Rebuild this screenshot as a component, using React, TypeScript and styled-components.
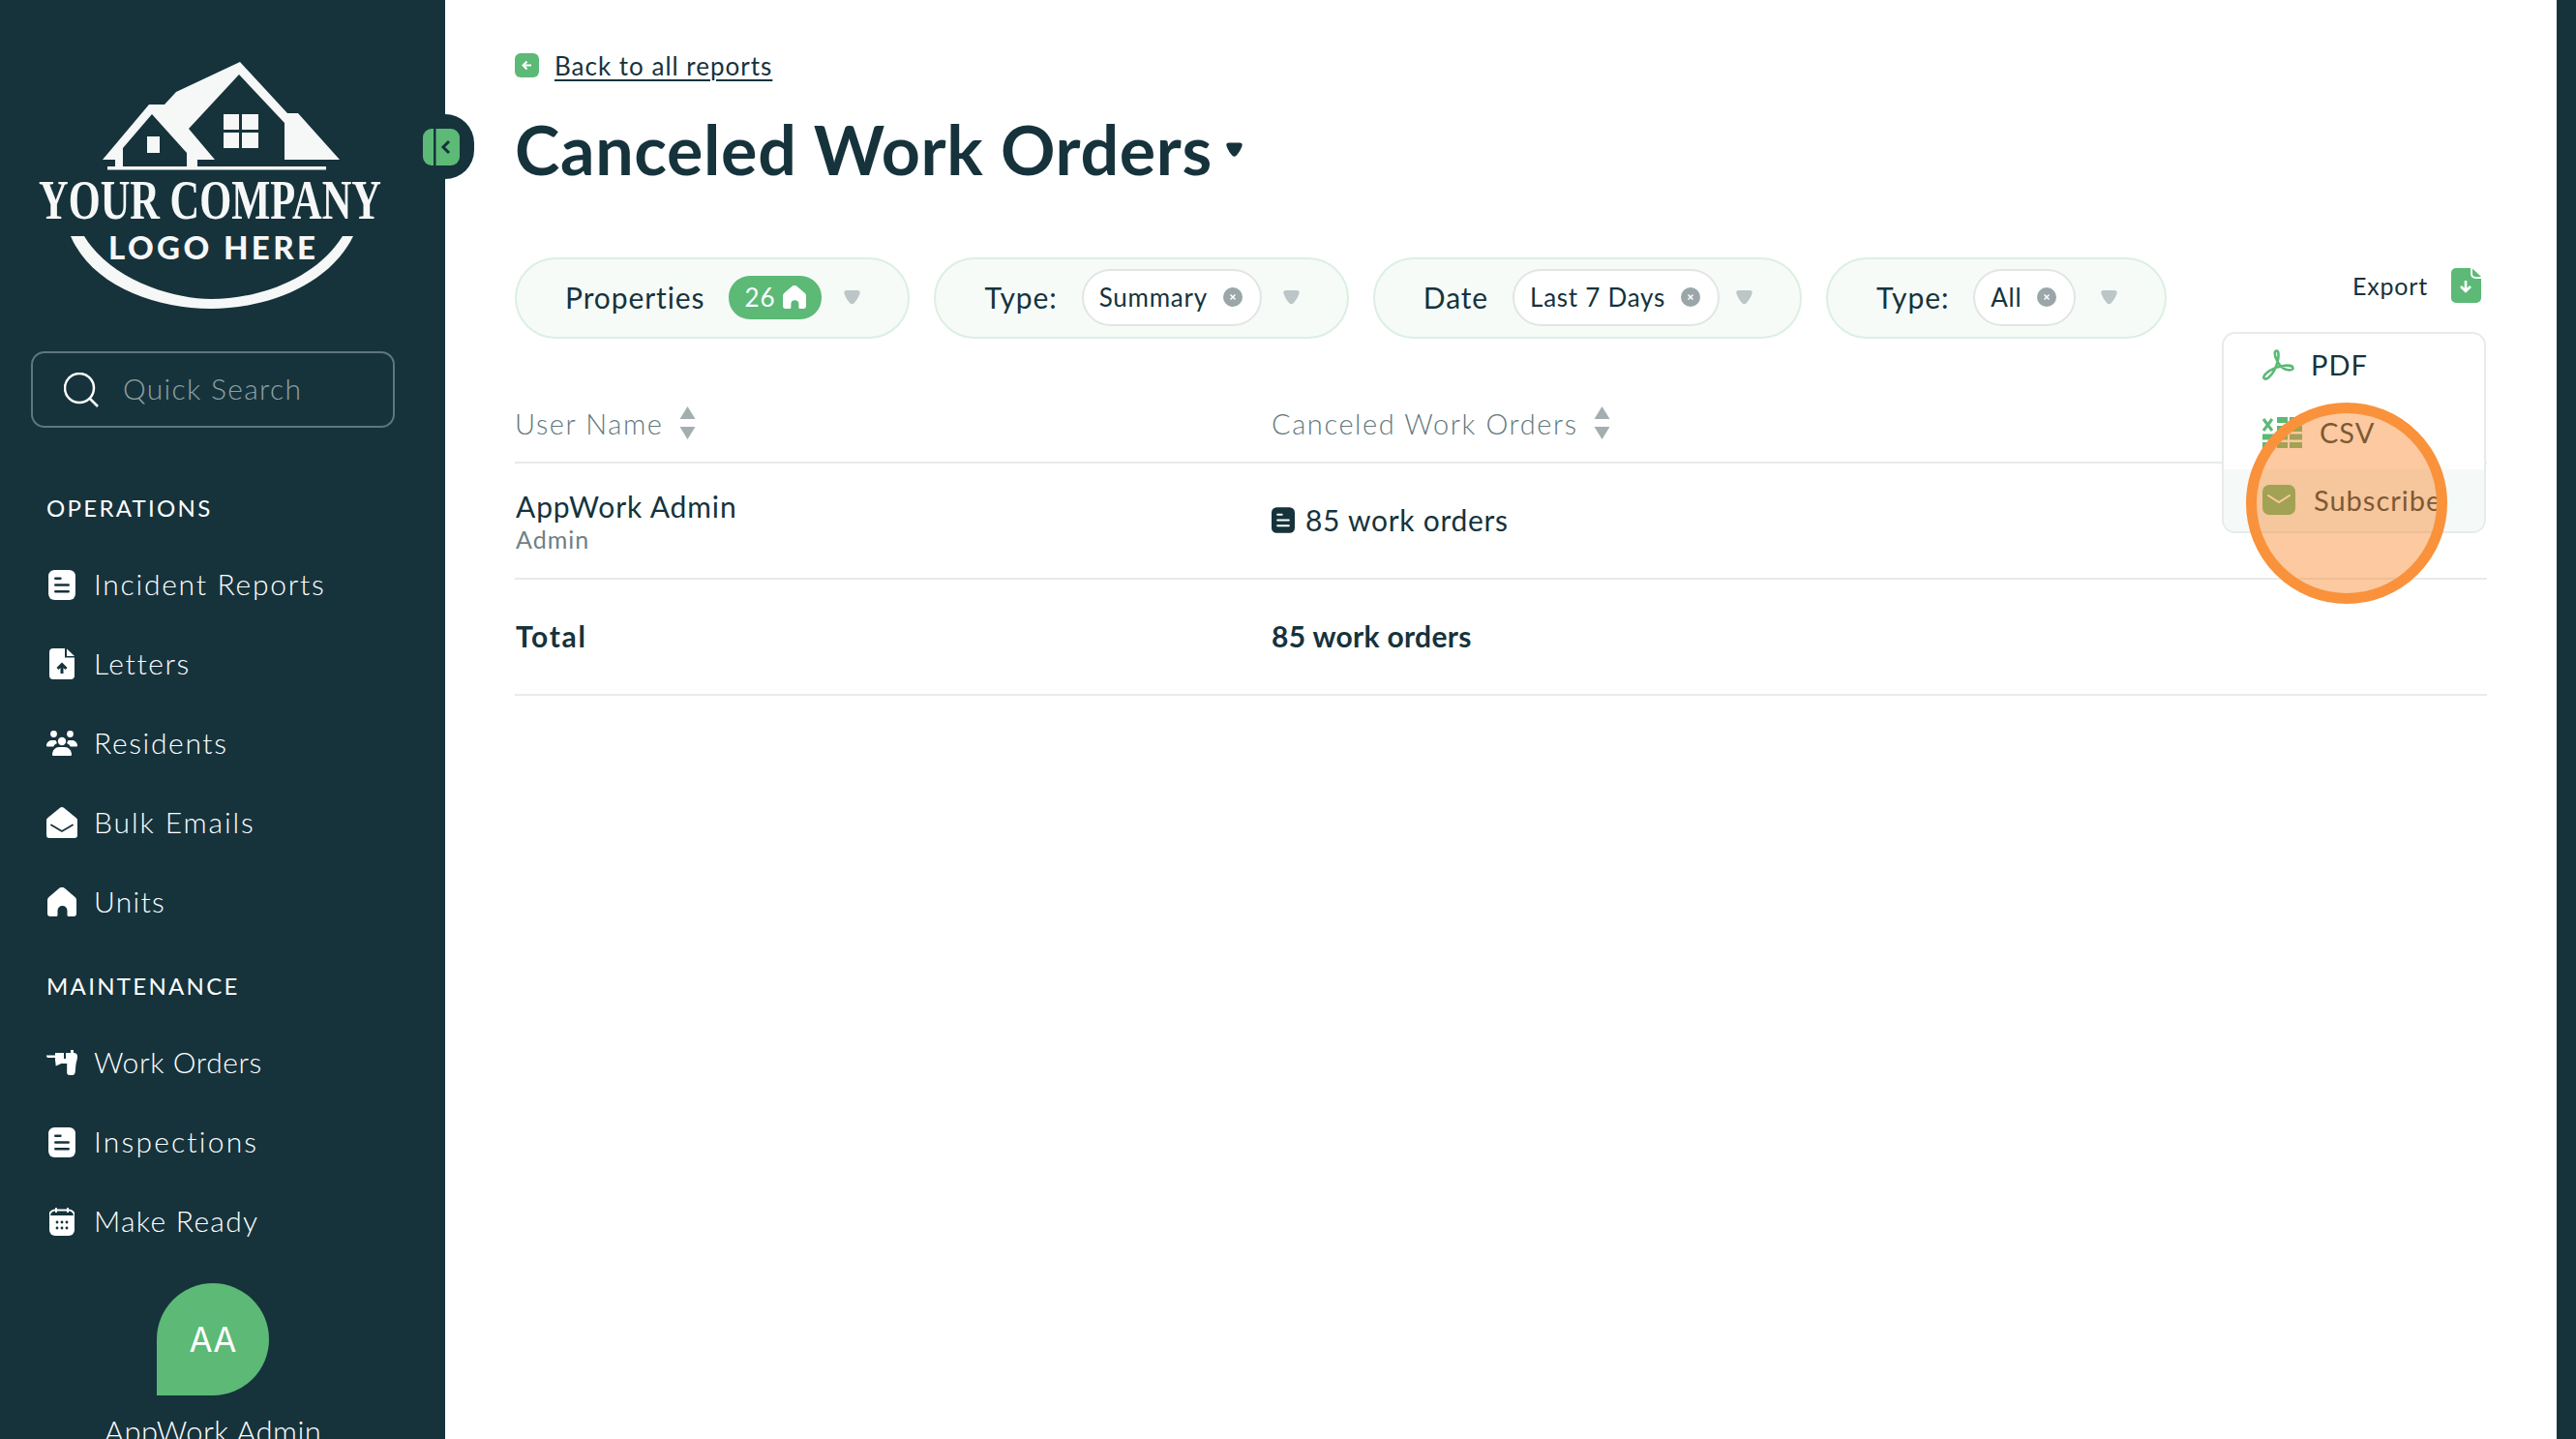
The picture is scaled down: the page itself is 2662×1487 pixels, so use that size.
import styled, { createGlobalStyle } from "styled-components";

const DARK = "#16333c";
const GREEN = "#5cb976";
const LINE = "#e8ebeb";

const GlobalStyle = createGlobalStyle`
  html, body {
    margin: 0;
    padding: 0;
    background: #fff;
    font-family: "Lato", "Noto Sans", sans-serif;
    color: ${DARK};
  }
  * { box-sizing: border-box; }
`;

const Shell = styled.div`
  position: relative;
  display: flex;
  width: 2662px;
  height: 1487px;
  overflow: hidden;
`;

const Sidebar = styled.aside`
  position: relative;
  flex: 0 0 460px;
  background: ${DARK};
  color: #fff;
  display: flex;
  flex-direction: column;
`;

const LogoSvg = styled.svg`
  display: block;
  flex: none;
  width: 460px;
  height: 363px;
`;

const SearchBox = styled.div`
  flex: none;
  display: flex;
  align-items: center;
  gap: 25px;
  width: 376px;
  height: 79px;
  margin: 0 0 37px 32px;
  padding-left: 32px;
  border: 2px solid #5e767d;
  border-radius: 14px;
  color: #8ea0a5;
  font-size: 30px;
  font-weight: 300;
  letter-spacing: 1.3px;
  span { margin-bottom: 3px; }
`;

const SectionLabel = styled.div`
  flex: none;
  height: 84px;
  padding: 6px 0 0 48px;
  display: flex;
  align-items: center;
  font-size: 24px;
  letter-spacing: 2.3px;
`;

const NavItem = styled.div`
  flex: none;
  height: 82px;
  display: flex;
  align-items: center;
  padding-left: 48px;
  font-size: 30px;
  font-weight: 300;
`;

const NavIcon = styled.span`
  flex: 0 0 32px;
  margin-right: 17px;
  display: flex;
  align-items: center;
  justify-content: center;
  svg { display: block; }
`;

const NavLabel = styled.span<{ $track: number }>`
  margin-bottom: 3px;
  letter-spacing: ${(p) => p.$track}px;
`;

const UserBlock = styled.div`
  flex: none;
  margin-top: 23px;
  padding-right: 20px;
  display: flex;
  flex-direction: column;
  align-items: center;
`;

const Avatar = styled.div`
  width: 116px;
  height: 116px;
  border-radius: 50% 50% 50% 0;
  background: ${GREEN};
  display: flex;
  align-items: center;
  justify-content: center;
  font-family: "Inter", sans-serif;
  font-size: 35px;
`;

const UserName = styled.div`
  margin-top: 18px;
  font-size: 31px;
  font-weight: 300;
  letter-spacing: 0.4px;
  white-space: nowrap;
`;

const CollapseTab = styled.div`
  position: absolute;
  top: 118px;
  left: 460px;
  width: 30px;
  height: 67px;
  background: ${DARK};
  border-radius: 0 34px 34px 0;
`;

const CollapseButton = styled.svg`
  position: absolute;
  top: 133px;
  left: 437px;
`;

const Main = styled.main`
  position: relative;
  flex: 1;
  min-width: 0;
  padding: 55px 72px 0;
`;

const RightStrip = styled.div`
  flex: 0 0 20px;
  background: ${DARK};
`;

const BackLink = styled.div`
  display: flex;
  align-items: center;
  gap: 16px;
  height: 25px;
  font-size: 26px;
  letter-spacing: 1px;
  span {
    text-decoration: underline;
    text-underline-offset: 4px;
    text-decoration-thickness: 2px;
  }
`;

const TitleRow = styled.div`
  display: flex;
  align-items: center;
  gap: 14px;
  height: 110px;
  margin-top: 19px;
`;

const Title = styled.h1`
  margin: 0;
  font-size: 70px;
  font-weight: 700;
  letter-spacing: 0.65px;
`;

const FilterBar = styled.div`
  position: relative;
  display: flex;
  align-items: center;
  gap: 25px;
  margin-top: 57px;
`;

const Pill = styled.div`
  display: flex;
  align-items: center;
  height: 84px;
  padding: 0 49px 2px 50px;
  background: #f6fbf8;
  border: 2px solid #dcefe3;
  border-radius: 42px;
  font-size: 30px;
  letter-spacing: 0.9px;
`;

const PillLabel = styled.span`
  margin-right: 25px;
`;

const CountBadge = styled.span`
  display: flex;
  align-items: center;
  justify-content: center;
  gap: 8px;
  width: 96px;
  height: 45px;
  margin-right: 23px;
  border-radius: 22px;
  background: ${GREEN};
  color: #fff;
  font-size: 26px;
`;

const Chip = styled.span<{ $after: number }>`
  display: flex;
  align-items: center;
  gap: 16px;
  height: 59px;
  margin-right: ${(p) => p.$after}px;
  padding: 0 18px 0 16px;
  background: #fff;
  border: 2px solid #e2e5e5;
  border-radius: 30px;
  font-size: 26px;
  letter-spacing: 0.75px;
`;

const ExportButton = styled.div`
  position: absolute;
  top: 11px;
  right: 6px;
  display: flex;
  align-items: center;
  gap: 24px;
  height: 36px;
  font-size: 25px;
  letter-spacing: 0.8px;
`;

const ExportMenu = styled.div`
  position: absolute;
  top: 343px;
  left: 2296px;
  width: 273px;
  height: 208px;
  background: #fff;
  border: 2px solid ${LINE};
  border-radius: 14px;
  overflow: hidden;
  z-index: 2;
`;

const MenuItem = styled.div<{ $active?: boolean; $gap: number }>`
  display: flex;
  align-items: center;
  gap: ${(p) => p.$gap}px;
  height: 70px;
  padding: 0 0 7px 40px;
  background: ${(p) => (p.$active ? "#f5f9f7" : "transparent")};
  font-size: 29px;
  letter-spacing: 1px;
`;

const Highlight = styled.div`
  position: absolute;
  top: 416px;
  left: 2321px;
  width: 208px;
  height: 208px;
  border: 11px solid #f9923b;
  border-radius: 50%;
  background: rgba(249, 135, 45, 0.45);
  z-index: 3;
`;

const TableRow = styled.div<{ $height: number }>`
  display: grid;
  grid-template-columns: 782px 1fr;
  align-items: center;
  height: ${(p) => p.$height}px;
  border-bottom: 2px solid ${LINE};
`;

const HeaderRow = styled(TableRow)`
  margin-top: 49px;
  padding-bottom: 2px;
  color: #64787d;
  font-size: 29px;
  font-weight: 300;
  letter-spacing: 1.6px;
`;

const HeaderCell = styled.div`
  display: flex;
  align-items: center;
  gap: 15px;
`;

const NameCell = styled.div`
  padding: 2px 0 0 1px;
  font-size: 30px;
  letter-spacing: 0.9px;
  line-height: 36px;
`;

const RoleText = styled.div`
  color: #6f8085;
  font-size: 25px;
  letter-spacing: 1px;
  line-height: 32px;
`;

const CountCell = styled.div`
  display: flex;
  align-items: center;
  gap: 11px;
  padding-bottom: 2px;
  font-size: 30px;
  letter-spacing: 0.7px;
`;

const TotalCell = styled.div<{ $spacing: number; $indent?: number }>`
  padding: 0 0 2px ${(p) => p.$indent ?? 0}px;
  font-size: 30px;
  font-weight: 700;
  letter-spacing: ${(p) => p.$spacing}px;
`;

type IconProps = { color?: string; cut?: string };

const DocIcon = ({ color = "#fff", cut = DARK, w = 28, h = 31 }: IconProps & { w?: number; h?: number }) => (
  <svg width={w} height={h} viewBox="0 0 27 30">
    <rect width="27" height="30" rx="6" fill={color} />
    <path d="M7 8.500h5M7 15h13M7 21.500h13" stroke={cut} strokeWidth="2.400" strokeLinecap="round" />
  </svg>
);

const UploadFileIcon = () => (
  <svg width="26" height="32" viewBox="0 0 26 32">
    <path d="M4 0h12v9.500h10V28a4 4 0 0 1-4 4H4a4 4 0 0 1-4-4V4a4 4 0 0 1 4-4z" fill="#fff" />
    <path d="M18 0.500L26 8h-8z" fill="#fff" />
    <path d="M13 26v-9M8.500 21l4.500-4.500L17.500 21" fill="none" stroke={DARK} strokeWidth="3" />
  </svg>
);

const PeopleIcon = () => (
  <svg width="32" height="26" viewBox="0 0 32 26" fill="#fff">
    <circle cx="7.500" cy="3.500" r="3.400" />
    <circle cx="24.500" cy="3.500" r="3.400" />
    <circle cx="16" cy="11" r="4.200" />
    <path d="M0 15.500c0-3.500 3-5.500 6-5.500h3.500c.5 1 1 2 1.500 3-2 1-3 1.800-3.800 3.500H1a1 1 0 0 1-1-1z" />
    <path d="M32 15.500c0-3.500-3-5.500-6-5.500h-3.500c-.5 1-1 2-1.500 3 2 1 3 1.800 3.800 3.500H31a1 1 0 0 0 1-1z" />
    <path d="M6 25c0-5 3.500-8 7-8h6c3.500 0 7 3 7 8a1 1 0 0 1-1 1H7a1 1 0 0 1-1-1z" />
  </svg>
);

const MailOpenIcon = () => (
  <svg width="32" height="32" viewBox="0 0 32 32">
    <path d="M0 13.500c0-1 .4-1.700 1.200-2.300L14 .8a3.200 3.200 0 0 1 4 0l12.800 10.400c.8.600 1.200 1.300 1.200 2.300V29a3 3 0 0 1-3 3H3a3 3 0 0 1-3-3z" fill="#fff" />
    <path d="M5 18.500l11 6.500 11-6.500" fill="none" stroke={DARK} strokeWidth="1.800" strokeLinecap="round" />
  </svg>
);

const HomeIcon = ({ size = 30, color = "#fff" }: IconProps & { size?: number }) => (
  <svg width={size} height={size} viewBox="0 0 30 30">
    <path d="M0 13.500c0-1.500.5-2.600 1.500-3.500l10.500-9a4.500 4.500 0 0 1 6 0l10.500 9c1 .9 1.500 2 1.500 3.500V27a3 3 0 0 1-3 3h-5a1.500 1.500 0 0 1-1.500-1.500V24a5 5 0 0 0-10 0v4.500A1.500 1.500 0 0 1 9 30H3a3 3 0 0 1-3-3z" fill={color} />
  </svg>
);

const DrillIcon = () => (
  <svg width="32" height="26" viewBox="0 0 32 26" fill="#fff">
    <path d="M0 5.500h9V3h19.500c2 0 3.500 1.500 3.500 3.500 0 3-1 5.500-1.500 8-.4 3-.5 6-.8 8.500-.2 2-1.500 3-3 3h-3c-1.500 0-2.500-1-2.500-2.500V14h-6l-2 1-3.500 1.500-.5-5H9V8H1.500C.5 8 0 7 0 5.500z" />
    <rect x="18" y="3" width="2" height="6" fill={DARK} />
    <rect x="25" y="0" width="3" height="3" />
  </svg>
);

const CalendarIcon = () => (
  <svg width="26" height="29" viewBox="0 0 26 29">
    <path d="M7 0v5M19 0v5" stroke="#fff" strokeWidth="2" />
    <path d="M6 2.500h14a6 6 0 0 1 6 6V9H0v-.5a6 6 0 0 1 6-6z" fill="none" stroke="#fff" strokeWidth="2" />
    <path d="M0 10h26v13a6 6 0 0 1-6 6H6a6 6 0 0 1-6-6z" fill="#fff" />
    {[8, 13, 18].map((x) =>
      [15, 21].map((y) => <circle key={`${x}-${y}`} cx={x} cy={y} r="1.400" fill={DARK} />)
    )}
  </svg>
);

const SearchIcon = () => (
  <svg width="36" height="36" viewBox="0 0 36 36" fill="none" stroke="#fff">
    <circle cx="16" cy="16" r="15" strokeWidth="2.500" />
    <path d="M27 27l8 8" strokeWidth="2.500" />
  </svg>
);

const Caret = ({ color = "#bcc6c8", w = 17, h = 14 }: IconProps & { w?: number; h?: number }) => (
  <svg width={w} height={h} viewBox="0 0 17 14">
    <path d="M3 0h11c2 0 3 1.200 2.600 3-.5 2.500-3.600 8-6 10.200a3 3 0 0 1-4.200 0C4 11 .9 5.500.4 3 0 1.200 1 0 3 0z" fill={color} />
  </svg>
);

const SortArrows = () => (
  <svg width="19" height="34" viewBox="0 0 19 34" fill="#a3aeb1">
    <path d="M9.500 0l8 13h-16z" />
    <path d="M9.500 34l8-13h-16z" />
  </svg>
);

const ClearIcon = () => (
  <svg width="20" height="20" viewBox="0 0 20 20">
    <circle cx="10" cy="10" r="10" fill="#9aa6a9" />
    <path d="M7.500 7.500l5 5M12.500 7.500l-5 5" stroke="#fff" strokeWidth="1.500" />
  </svg>
);

const BackIcon = () => (
  <svg width="25" height="25" viewBox="0 0 25 25">
    <rect width="25" height="25" rx="6" fill={GREEN} />
    <path d="M17 12.500H9M12.500 8.500l-4 4 4 4" fill="none" stroke="#fff" strokeWidth="2" />
  </svg>
);

const DownloadFileIcon = () => (
  <svg width="31" height="36" viewBox="0 0 31 36">
    <path d="M5 0h15v6a5 5 0 0 0 5 5h6v20a5 5 0 0 1-5 5H5a5 5 0 0 1-5-5V5a5 5 0 0 1 5-5z" fill={GREEN} />
    <path d="M22 0.500L31 9h-6a3 3 0 0 1-3-3z" fill={GREEN} />
    <path d="M15 13v10M10 19l5 5 5-5" fill="none" stroke="#fff" strokeWidth="2.600" />
  </svg>
);

const PdfIcon = () => (
  <svg width="33" height="32" viewBox="0 0 33 32" fill="none" stroke={GREEN} strokeWidth="2.600">
    <path d="M15 1.500c-3 0-3 4 0 10 2 4.500 5.500 8.500 10 9.500 4 1 7 0 6.500-2-.5-2.300-6-2.800-12.500-1.500C11 19 3 24 1.500 28c-1 3 2 3.500 5 1 4-3.500 8-11 9.500-18 1-5 .5-9.500-1-9.500z" />
  </svg>
);

const CsvIcon = () => (
  <svg width="41" height="32" viewBox="0 0 41 32" fill={GREEN}>
    <path d="M1 2l9 12M10 2L1 14" stroke={GREEN} strokeWidth="3" />
    <rect x="15" y="0" width="11" height="6" />
    <rect x="28" y="0" width="13" height="6" />
    <rect x="15" y="9" width="11" height="6" />
    <rect x="28" y="9" width="13" height="6" />
    <rect x="0" y="17.500" width="26" height="6" />
    <rect x="28" y="17.500" width="13" height="6" />
    <rect x="0" y="26" width="13" height="6" />
    <rect x="15" y="26" width="11" height="6" />
    <rect x="28" y="26" width="13" height="6" />
  </svg>
);

const MailIcon = () => (
  <svg width="34" height="31" viewBox="0 0 34 31">
    <rect width="34" height="31" rx="7" fill={GREEN} />
    <path d="M6 11l11 7 11-7" fill="none" stroke="#fff" strokeWidth="2" strokeLinecap="round" />
  </svg>
);

const Logo = () => (
  <LogoSvg viewBox="0 0 460 363" fill="#f6f7f7">
    <path d="M106 165L154 108H170L182 95L248 64L297 117H308L351 165H294V127L247 77L195 133L222 165H204V172H193V158L157 118L127 153V172H119V165Z" />
    <rect x="111" y="172" width="226" height="3.500" />
    <rect x="152" y="141" width="13" height="17" />
    <rect x="231" y="118" width="16" height="16" />
    <rect x="250" y="118" width="17" height="16" />
    <rect x="231" y="137" width="16" height="16" />
    <rect x="250" y="137" width="17" height="16" />
    <text
      x="40"
      y="226"
      textLength="354"
      lengthAdjust="spacingAndGlyphs"
      fontFamily="Liberation Serif, serif"
      fontWeight="700"
      fontSize="57"
    >
      YOUR COMPANY
    </text>
    <text
      x="112"
      y="268"
      textLength="214"
      lengthAdjust="spacing"
      fontFamily="Lato, sans-serif"
      fontWeight="900"
      fontSize="33"
    >
      LOGO HERE
    </text>
    <path d="M73 244H87C115 290 180 309 218 309C265 309 325 290 354 244H365C340 295 275 319 218 319C160 319 95 295 73 244Z" />
  </LogoSvg>
);

const operations = [
  { label: "Incident Reports", track: 1.75, icon: <DocIcon /> },
  { label: "Letters", track: 1.6, icon: <UploadFileIcon /> },
  { label: "Residents", track: 1.65, icon: <PeopleIcon /> },
  { label: "Bulk Emails", track: 1.9, icon: <MailOpenIcon /> },
  { label: "Units", track: 1.3, icon: <HomeIcon /> },
];

const maintenance = [
  { label: "Work Orders", track: 0.6, icon: <DrillIcon /> },
  { label: "Inspections", track: 2.2, icon: <DocIcon /> },
  { label: "Make Ready", track: 1.3, icon: <CalendarIcon /> },
];

const filters = [
  { label: "Type:", value: "Summary", after: 22 },
  { label: "Date", value: "Last 7 Days", after: 17 },
  { label: "Type:", value: "All", after: 26 },
];

export default function App() {
  return (
    <Shell>
      <GlobalStyle />
      <Sidebar>
        <Logo />
        <SearchBox>
          <SearchIcon />
          <span>Quick Search</span>
        </SearchBox>
        <SectionLabel>OPERATIONS</SectionLabel>
        {operations.map((item) => (
          <NavItem key={item.label}>
            <NavIcon>{item.icon}</NavIcon>
            <NavLabel $track={item.track}>{item.label}</NavLabel>
          </NavItem>
        ))}
        <SectionLabel>MAINTENANCE</SectionLabel>
        {maintenance.map((item) => (
          <NavItem key={item.label}>
            <NavIcon>{item.icon}</NavIcon>
            <NavLabel $track={item.track}>{item.label}</NavLabel>
          </NavItem>
        ))}
        <UserBlock>
          <Avatar>AA</Avatar>
          <UserName>AppWork Admin</UserName>
        </UserBlock>
      </Sidebar>
      <CollapseTab />
      <CollapseButton width="38" height="38" viewBox="0 0 38 38">
        <rect width="38" height="38" rx="9" fill={GREEN} />
        <rect x="11" width="2.500" height="38" fill={DARK} />
        <path d="M27 13l-6 6 6 6" fill="none" stroke={DARK} strokeWidth="3" />
      </CollapseButton>
      <Main>
        <BackLink>
          <BackIcon />
          <span>Back to all reports</span>
        </BackLink>
        <TitleRow>
          <Title>Canceled Work Orders</Title>
          <Caret color={DARK} w={17} h={15} />
        </TitleRow>
        <FilterBar>
          <Pill>
            <PillLabel>Properties</PillLabel>
            <CountBadge>
              26
              <HomeIcon size={24} />
            </CountBadge>
            <Caret />
          </Pill>
          {filters.map((f) => (
            <Pill key={f.label + f.value}>
              <PillLabel>{f.label}</PillLabel>
              <Chip $after={f.after}>
                {f.value}
                <ClearIcon />
              </Chip>
              <Caret />
            </Pill>
          ))}
          <ExportButton>
            Export
            <DownloadFileIcon />
          </ExportButton>
        </FilterBar>
        <HeaderRow $height={80}>
          <HeaderCell>
            User Name
            <SortArrows />
          </HeaderCell>
          <HeaderCell>
            Canceled Work Orders
            <SortArrows />
          </HeaderCell>
        </HeaderRow>
        <TableRow $height={120}>
          <NameCell>
            AppWork Admin
            <RoleText>Admin</RoleText>
          </NameCell>
          <CountCell>
            <DocIcon color={DARK} cut="#fff" w={24} h={27} />
            85 work orders
          </CountCell>
        </TableRow>
        <TableRow $height={120}>
          <TotalCell $spacing={1.7} $indent={1}>Total</TotalCell>
          <TotalCell $spacing={0.3}>85 work orders</TotalCell>
        </TableRow>
      </Main>
      <RightStrip />
      <ExportMenu>
        <MenuItem $gap={17}>
          <PdfIcon />
          PDF
        </MenuItem>
        <MenuItem $gap={18}>
          <CsvIcon />
          CSV
        </MenuItem>
        <MenuItem $active $gap={19}>
          <MailIcon />
          Subscribe
        </MenuItem>
      </ExportMenu>
      <Highlight />
    </Shell>
  );
}
